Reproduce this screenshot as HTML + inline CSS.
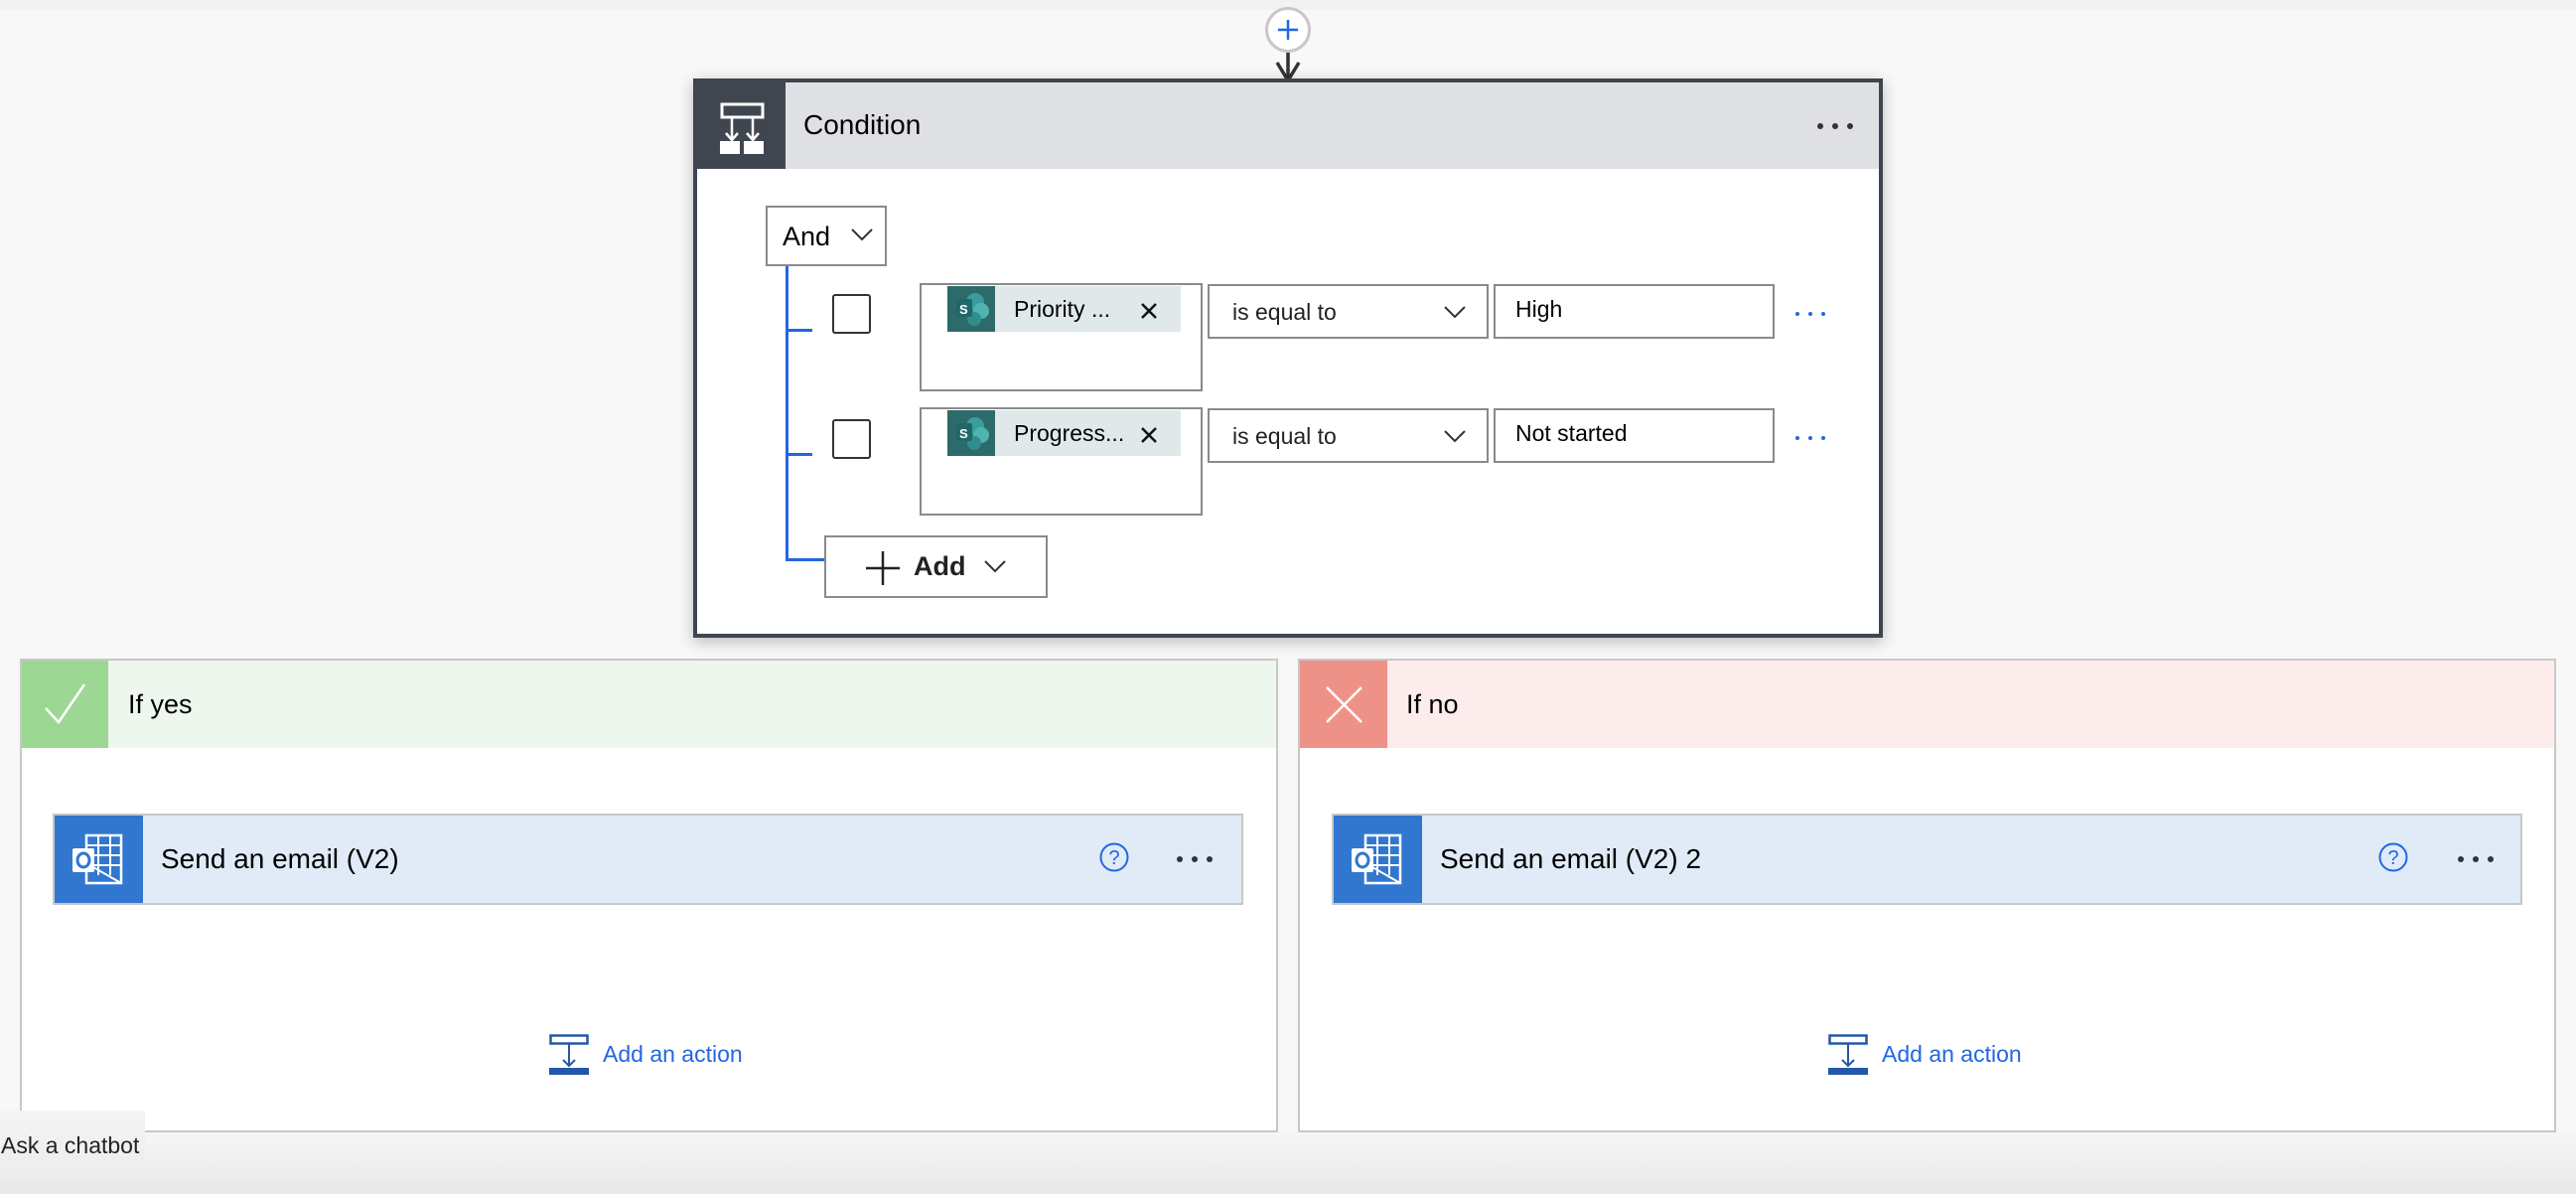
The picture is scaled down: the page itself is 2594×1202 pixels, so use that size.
<!DOCTYPE html>
<html><head><meta charset="utf-8"><style>
*{box-sizing:border-box;margin:0;padding:0}
body{width:2594px;height:1202px;position:relative;overflow:hidden;background:#f8f8f8;font-family:"Liberation Sans","DejaVu Sans",sans-serif;color:#000}
.a{position:absolute}
.box{position:absolute;background:#fff;border:2px solid #8a8a8a}
.t{position:absolute;white-space:nowrap}
.dots{position:absolute;display:flex;gap:9px}
.dots i{width:6px;height:6px;border-radius:50%;background:#333;display:block}
.bd i{background:#2266e3;width:4px;height:4px}
</style></head><body>
<div class="a" style="left:0;top:0;width:2594px;height:10px;background:#f2f2f2"></div>
<div class="a" style="left:0;top:1140px;width:2594px;height:62px;background:linear-gradient(#f6f6f6,#e8e8e8)"></div>
<div class="a" style="left:1274px;top:7px;width:46px;height:46px;border-radius:50%;background:#fff;border:3px solid #c8c8c8"></div>
<svg class="a" style="left:1274px;top:7px" width="46" height="80"><path d="M23 13v20M13 23h20" stroke="#2266e3" stroke-width="2.5"/><path d="M23 46v28M12 56l11 18 11-18" stroke="#333" stroke-width="3.5" fill="none"/></svg>
<div class="a" style="left:698px;top:79px;width:1198px;height:563px;border:4px solid #404650;background:#fff;box-shadow:0 4px 14px rgba(0,0,0,.25)"></div>
<div class="a" style="left:702px;top:83px;width:1190px;height:87px;background:#dfe0e3"></div>
<div class="a" style="left:702px;top:83px;width:89px;height:87px;background:#404650"></div>
<svg class="a" style="left:702px;top:83px" width="89" height="87"><rect x="25" y="22" width="41" height="13" fill="none" stroke="#fff" stroke-width="3"/><path d="M35 35v22M56 35v22M29 51l6 7 6-7M50 51l6 7 6-7" stroke="#fff" stroke-width="2.5" fill="none"/><rect x="23" y="59" width="20" height="13" fill="#fff"/><rect x="47" y="59" width="20" height="13" fill="#fff"/></svg>
<div class="t" style="left:809px;top:110px;font-size:28px">Condition</div>
<div class="dots" style="left:1830px;top:124px"><i></i><i></i><i></i></div>
<div class="box" style="left:771px;top:207px;width:122px;height:61px"></div>
<div class="t" style="left:788px;top:223px;font-size:27px">And</div>
<svg class="a" style="left:857px;top:229px" width="22" height="14"><path d="M1 2l10 10 10-10" stroke="#333" stroke-width="2" fill="none"/></svg>
<div class="a" style="left:791px;top:268px;width:3px;height:297px;background:#2266e3"></div>
<div class="a" style="left:791px;top:331px;width:27px;height:3px;background:#2266e3"></div>
<div class="a" style="left:791px;top:456px;width:27px;height:3px;background:#2266e3"></div>
<div class="a" style="left:791px;top:562px;width:40px;height:3px;background:#2266e3"></div>
<div class="a" style="left:838px;top:296px;width:39px;height:40px;border:2.5px solid #333;border-radius:3px"></div>
<div class="a" style="left:838px;top:422px;width:39px;height:40px;border:2.5px solid #333;border-radius:3px"></div>
<div class="box" style="left:926px;top:285px;width:285px;height:109px"></div>
<div class="box" style="left:926px;top:410px;width:285px;height:109px"></div>
<div class="a" style="left:954px;top:288px;width:235px;height:46px;background:#e0e8ea"></div>
<div class="a" style="left:954px;top:413px;width:235px;height:46px;background:#e0e8ea"></div>
<svg class="a" style="left:954px;top:288px" width="48" height="46"><rect width="48" height="46" fill="#2d6a6a"/><circle cx="28" cy="16" r="9" fill="#3a9c9c"/><circle cx="34" cy="25" r="8" fill="#4fb3b0"/><circle cx="27" cy="33" r="7" fill="#2f8f8f"/><rect x="9" y="13" width="16" height="18" rx="2" fill="#1f6868"/><text x="12" y="28" fill="#fff" font-size="13" font-weight="bold" font-family="Liberation Sans">S</text></svg>
<svg class="a" style="left:954px;top:413px" width="48" height="46"><rect width="48" height="46" fill="#2d6a6a"/><circle cx="28" cy="16" r="9" fill="#3a9c9c"/><circle cx="34" cy="25" r="8" fill="#4fb3b0"/><circle cx="27" cy="33" r="7" fill="#2f8f8f"/><rect x="9" y="13" width="16" height="18" rx="2" fill="#1f6868"/><text x="12" y="28" fill="#fff" font-size="13" font-weight="bold" font-family="Liberation Sans">S</text></svg>
<div class="t" style="left:1021px;top:298px;font-size:23px">Priority ...</div>
<div class="t" style="left:1021px;top:423px;font-size:23px">Progress...</div>
<svg class="a" style="left:1148px;top:304px" width="18" height="18"><path d="M2 2l14 14M16 2L2 16" stroke="#111" stroke-width="2.5"/></svg>
<svg class="a" style="left:1148px;top:429px" width="18" height="18"><path d="M2 2l14 14M16 2L2 16" stroke="#111" stroke-width="2.5"/></svg>
<div class="box" style="left:1216px;top:286px;width:283px;height:55px"></div>
<div class="box" style="left:1216px;top:411px;width:283px;height:55px"></div>
<div class="t" style="left:1241px;top:301px;font-size:23px;color:#222">is equal to</div>
<div class="t" style="left:1241px;top:426px;font-size:23px;color:#222">is equal to</div>
<svg class="a" style="left:1454px;top:307px" width="22" height="14"><path d="M1 2l10 10 10-10" stroke="#333" stroke-width="2" fill="none"/></svg>
<svg class="a" style="left:1454px;top:432px" width="22" height="14"><path d="M1 2l10 10 10-10" stroke="#333" stroke-width="2" fill="none"/></svg>
<div class="box" style="left:1504px;top:286px;width:283px;height:55px"></div>
<div class="box" style="left:1504px;top:411px;width:283px;height:55px"></div>
<div class="t" style="left:1526px;top:298px;font-size:23px">High</div>
<div class="t" style="left:1526px;top:423px;font-size:23px">Not started</div>
<div class="dots bd" style="left:1808px;top:314px"><i></i><i></i><i></i></div>
<div class="dots bd" style="left:1808px;top:439px"><i></i><i></i><i></i></div>
<div class="box" style="left:830px;top:539px;width:225px;height:63px"></div>
<svg class="a" style="left:872px;top:555px" width="34" height="34"><path d="M17 0v34M0 17h34" stroke="#222" stroke-width="2.5"/></svg>
<div class="t" style="left:920px;top:555px;font-size:27px;font-weight:bold;color:#222">Add</div>
<svg class="a" style="left:991px;top:563px" width="22" height="14"><path d="M1 2l10 10 10-10" stroke="#333" stroke-width="2" fill="none"/></svg>
<div class="a" style="left:20px;top:663px;width:1267px;height:477px;border:2px solid #c8c8c8;background:#fff"></div>
<div class="a" style="left:22px;top:665px;width:1263px;height:88px;background:#eef7ee"></div>
<div class="a" style="left:22px;top:665px;width:87px;height:88px;background:#9cd893"></div>
<svg class="a" style="left:22px;top:665px" width="87" height="88"><path d="M24 48l13 14L63 24" stroke="#fff" stroke-width="2.5" fill="none"/></svg>
<div class="t" style="left:129px;top:694px;font-size:27px">If yes</div>
<div class="a" style="left:1307px;top:663px;width:1267px;height:477px;border:2px solid #c8c8c8;background:#fff"></div>
<div class="a" style="left:1309px;top:665px;width:1263px;height:88px;background:#fcecec"></div>
<div class="a" style="left:1309px;top:665px;width:88px;height:88px;background:#ee9287"></div>
<svg class="a" style="left:1309px;top:665px" width="88" height="88"><path d="M27 27l35 35M62 27L27 62" stroke="#fff" stroke-width="2.5"/></svg>
<div class="t" style="left:1416px;top:694px;font-size:27px">If no</div>
<div class="a" style="left:53px;top:819px;width:1199px;height:92px;border:2px solid #c8c8c8;background:#e0ebf7"></div>
<div class="a" style="left:1341px;top:819px;width:1199px;height:92px;border:2px solid #c8c8c8;background:#e0ebf7"></div>
<svg class="a" style="left:55px;top:821px" width="89" height="88"><rect width="89" height="88" fill="#3277cf"/><rect x="32" y="20" width="35" height="48" fill="none" stroke="#fff" stroke-width="2.5"/><path d="M32 30h35M32 40h35M32 50h35M44 20v40M56 20v40M32 48l35 20" stroke="#fff" stroke-width="2"/><rect x="18" y="33" width="22" height="24" rx="2" fill="#fff"/><ellipse cx="29" cy="45" rx="6" ry="7" fill="none" stroke="#3277cf" stroke-width="3"/></svg>
<svg class="a" style="left:1343px;top:821px" width="89" height="88"><rect width="89" height="88" fill="#3277cf"/><rect x="32" y="20" width="35" height="48" fill="none" stroke="#fff" stroke-width="2.5"/><path d="M32 30h35M32 40h35M32 50h35M44 20v40M56 20v40M32 48l35 20" stroke="#fff" stroke-width="2"/><rect x="18" y="33" width="22" height="24" rx="2" fill="#fff"/><ellipse cx="29" cy="45" rx="6" ry="7" fill="none" stroke="#3277cf" stroke-width="3"/></svg>
<div class="t" style="left:162px;top:849px;font-size:28px">Send an email (V2)</div>
<div class="t" style="left:1450px;top:849px;font-size:28px">Send an email (V2) 2</div>
<svg class="a" style="left:1107px;top:848px" width="30" height="30"><circle cx="15" cy="15" r="13.5" fill="none" stroke="#2266e3" stroke-width="2"/><text x="15" y="22" text-anchor="middle" fill="#2266e3" font-size="20" font-family="Liberation Sans">?</text></svg>
<svg class="a" style="left:2395px;top:848px" width="30" height="30"><circle cx="15" cy="15" r="13.5" fill="none" stroke="#2266e3" stroke-width="2"/><text x="15" y="22" text-anchor="middle" fill="#2266e3" font-size="20" font-family="Liberation Sans">?</text></svg>
<div class="dots" style="left:1185px;top:862px"><i></i><i></i><i></i></div>
<div class="dots" style="left:2475px;top:862px"><i></i><i></i><i></i></div>
<svg class="a" style="left:553px;top:1041px" width="40" height="42"><rect x="1.5" y="1.5" width="37" height="8" fill="none" stroke="#2557a8" stroke-width="2.5"/><path d="M20 10v22M14 26l6 6 6-6" stroke="#2557a8" stroke-width="2" fill="none"/><rect y="34" width="40" height="7" fill="#2557a8"/></svg>
<svg class="a" style="left:1841px;top:1041px" width="40" height="42"><rect x="1.5" y="1.5" width="37" height="8" fill="none" stroke="#2557a8" stroke-width="2.5"/><path d="M20 10v22M14 26l6 6 6-6" stroke="#2557a8" stroke-width="2" fill="none"/><rect y="34" width="40" height="7" fill="#2557a8"/></svg>
<div class="t" style="left:607px;top:1048px;font-size:23px;color:#2266e3">Add an action</div>
<div class="t" style="left:1895px;top:1048px;font-size:23px;color:#2266e3">Add an action</div>
<div class="a" style="left:0;top:1118px;width:146px;height:70px;background:linear-gradient(#f4f4f4,#ececec)"></div>
<div class="t" style="left:1px;top:1140px;font-size:23px;color:#222">Ask a chatbot</div>
</body></html>
